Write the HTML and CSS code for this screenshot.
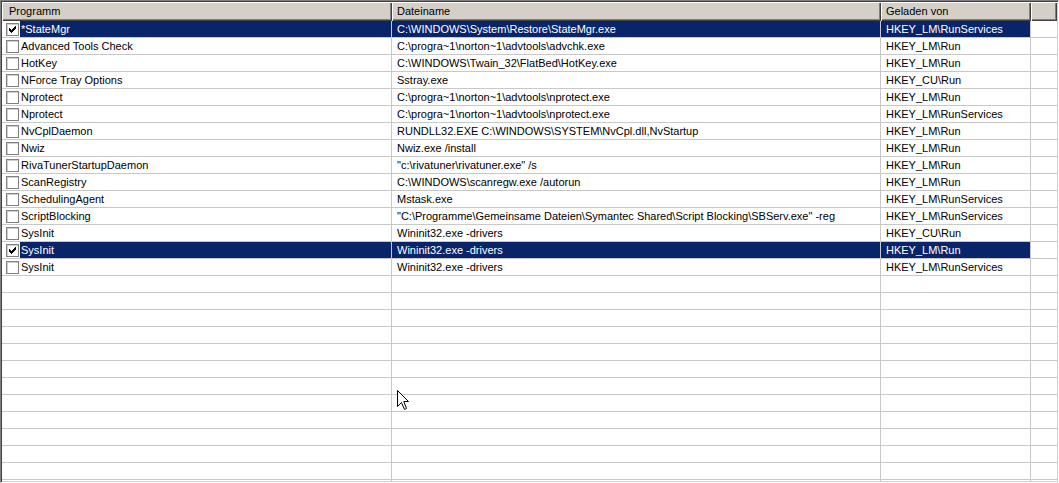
FILE: index.html
```html
<!DOCTYPE html>
<html>
<head>
<meta charset="utf-8">
<link rel="stylesheet" href="styles.css">
</head>
<body>
<div class="list">
  <div class="header">
    <div class="hcell c0 h0">Programm</div>
    <div class="hcell c1">Dateiname</div>
    <div class="hcell c2">Geladen von</div>
    <div class="hcell c3"></div>
  </div>
  <div class="rows">
    <div class="row sel"><div class="cell c0"><span class="cb on"></span><span class="name">*StateMgr</span></div><div class="cell c1">C:\WINDOWS\System\Restore\StateMgr.exe</div><div class="cell c2">HKEY_LM\RunServices</div><div class="cell c3"></div></div>
    <div class="row"><div class="cell c0"><span class="cb"></span><span class="name">Advanced Tools Check</span></div><div class="cell c1">C:\progra~1\norton~1\advtools\advchk.exe</div><div class="cell c2">HKEY_LM\Run</div><div class="cell c3"></div></div>
    <div class="row"><div class="cell c0"><span class="cb"></span><span class="name">HotKey</span></div><div class="cell c1">C:\WINDOWS\Twain_32\FlatBed\HotKey.exe</div><div class="cell c2">HKEY_LM\Run</div><div class="cell c3"></div></div>
    <div class="row"><div class="cell c0"><span class="cb"></span><span class="name">NForce Tray Options</span></div><div class="cell c1">Sstray.exe</div><div class="cell c2">HKEY_CU\Run</div><div class="cell c3"></div></div>
    <div class="row"><div class="cell c0"><span class="cb"></span><span class="name">Nprotect</span></div><div class="cell c1">C:\progra~1\norton~1\advtools\nprotect.exe</div><div class="cell c2">HKEY_LM\Run</div><div class="cell c3"></div></div>
    <div class="row"><div class="cell c0"><span class="cb"></span><span class="name">Nprotect</span></div><div class="cell c1">C:\progra~1\norton~1\advtools\nprotect.exe</div><div class="cell c2">HKEY_LM\RunServices</div><div class="cell c3"></div></div>
    <div class="row"><div class="cell c0"><span class="cb"></span><span class="name">NvCplDaemon</span></div><div class="cell c1">RUNDLL32.EXE C:\WINDOWS\SYSTEM\NvCpl.dll,NvStartup</div><div class="cell c2">HKEY_LM\Run</div><div class="cell c3"></div></div>
    <div class="row"><div class="cell c0"><span class="cb"></span><span class="name">Nwiz</span></div><div class="cell c1">Nwiz.exe /install</div><div class="cell c2">HKEY_LM\Run</div><div class="cell c3"></div></div>
    <div class="row"><div class="cell c0"><span class="cb"></span><span class="name">RivaTunerStartupDaemon</span></div><div class="cell c1">"c:\rivatuner\rivatuner.exe" /s</div><div class="cell c2">HKEY_LM\Run</div><div class="cell c3"></div></div>
    <div class="row"><div class="cell c0"><span class="cb"></span><span class="name">ScanRegistry</span></div><div class="cell c1">C:\WINDOWS\scanregw.exe /autorun</div><div class="cell c2">HKEY_LM\Run</div><div class="cell c3"></div></div>
    <div class="row"><div class="cell c0"><span class="cb"></span><span class="name">SchedulingAgent</span></div><div class="cell c1">Mstask.exe</div><div class="cell c2">HKEY_LM\RunServices</div><div class="cell c3"></div></div>
    <div class="row"><div class="cell c0"><span class="cb"></span><span class="name">ScriptBlocking</span></div><div class="cell c1">"C:\Programme\Gemeinsame Dateien\Symantec Shared\Script Blocking\SBServ.exe" -reg</div><div class="cell c2">HKEY_LM\RunServices</div><div class="cell c3"></div></div>
    <div class="row"><div class="cell c0"><span class="cb"></span><span class="name">SysInit</span></div><div class="cell c1">Wininit32.exe -drivers</div><div class="cell c2">HKEY_CU\Run</div><div class="cell c3"></div></div>
    <div class="row sel"><div class="cell c0"><span class="cb on"></span><span class="name">SysInit</span></div><div class="cell c1">Wininit32.exe -drivers</div><div class="cell c2">HKEY_LM\Run</div><div class="cell c3"></div></div>
    <div class="row"><div class="cell c0"><span class="cb"></span><span class="name">SysInit</span></div><div class="cell c1">Wininit32.exe -drivers</div><div class="cell c2">HKEY_LM\RunServices</div><div class="cell c3"></div></div>
    <div class="row"><div class="cell c0"></div><div class="cell c1"></div><div class="cell c2"></div><div class="cell c3"></div></div>
    <div class="row"><div class="cell c0"></div><div class="cell c1"></div><div class="cell c2"></div><div class="cell c3"></div></div>
    <div class="row"><div class="cell c0"></div><div class="cell c1"></div><div class="cell c2"></div><div class="cell c3"></div></div>
    <div class="row"><div class="cell c0"></div><div class="cell c1"></div><div class="cell c2"></div><div class="cell c3"></div></div>
    <div class="row"><div class="cell c0"></div><div class="cell c1"></div><div class="cell c2"></div><div class="cell c3"></div></div>
    <div class="row"><div class="cell c0"></div><div class="cell c1"></div><div class="cell c2"></div><div class="cell c3"></div></div>
    <div class="row"><div class="cell c0"></div><div class="cell c1"></div><div class="cell c2"></div><div class="cell c3"></div></div>
    <div class="row"><div class="cell c0"></div><div class="cell c1"></div><div class="cell c2"></div><div class="cell c3"></div></div>
    <div class="row"><div class="cell c0"></div><div class="cell c1"></div><div class="cell c2"></div><div class="cell c3"></div></div>
    <div class="row"><div class="cell c0"></div><div class="cell c1"></div><div class="cell c2"></div><div class="cell c3"></div></div>
    <div class="row"><div class="cell c0"></div><div class="cell c1"></div><div class="cell c2"></div><div class="cell c3"></div></div>
    <div class="row"><div class="cell c0"></div><div class="cell c1"></div><div class="cell c2"></div><div class="cell c3"></div></div>
    <div class="row"><div class="cell c0"></div><div class="cell c1"></div><div class="cell c2"></div><div class="cell c3"></div></div>
  </div>
  <svg class="cursor" width="13" height="21" viewBox="0 0 13 21"><path d="M0.5 0.5 L0.5 16.5 L4.5 12.5 L7.5 19.5 L9.5 18.5 L6.8 11.5 L11.5 11.5 Z" fill="#fff" stroke="#000" stroke-width="1" stroke-linejoin="miter"/></svg>
</div>
</body>
</html>
```

FILE: styles.css
```css
html, body {
  margin: 0;
  padding: 0;
  background: #fff;
}
body {
  width: 1059px;
  height: 483px;
  overflow: hidden;
  font-family: "Liberation Sans", Arial, sans-serif;
  font-size: 11px;
  color: #000;
}
.list {
  position: relative;
  box-sizing: border-box;
  width: 1059px;
  height: 483px;
  border-top: 1px solid #808080;
  border-left: 1px solid #808080;
  border-right: 1px solid #fff;
  border-bottom: 1px solid #fff;
  box-shadow: inset 1px 1px 0 #404040, inset -1px -1px 0 #d4d0c8;
  padding: 1px;
  overflow: hidden;
  background: #fff;
}
.header {
  display: flex;
  height: 19px;
}
.hcell {
  box-sizing: border-box;
  height: 19px;
  line-height: 19px;
  background: #d4d0c8;
  padding-left: 5px;
  white-space: nowrap;
  box-shadow: inset 1px 1px 0 #fff, inset -1px -1px 0 #404040, inset -2px -2px 0 #808080;
}
.h0 { padding-left: 7px; }
.c0 { width: 390px; flex: none; }
.c1 { width: 489px; flex: none; }
.c2 { width: 150px; flex: none; }
.c3 { flex: 1; }
.rows {
  display: flex;
  flex-direction: column;
}
.row {
  display: flex;
  height: 17px;
  flex: none;
}
.cell {
  box-sizing: border-box;
  height: 17px;
  line-height: 17px;
  border-right: 1px solid #c8c8c8;
  border-bottom: 1px solid #c8c8c8;
  padding-left: 5px;
  white-space: nowrap;
  overflow: hidden;
}
.cell.c0 {
  padding-left: 4px;
  display: flex;
  align-items: stretch;
}
.cell.c3 { border-right: none; }
.cb {
  box-sizing: border-box;
  width: 13px;
  height: 13px;
  margin-top: 2px;
  margin-right: 1px;
  flex: none;
  border: 1px solid #808080;
  box-shadow: inset 1px 1px 0 #d4d0c8;
  background: #fff;
  position: relative;
}
.cb.on::after {
  content: "";
  position: absolute;
  left: 2px;
  top: 2px;
  width: 7px;
  height: 7px;
  background:
    linear-gradient(#000, #000) 0 2px / 1px 3px no-repeat,
    linear-gradient(#000, #000) 1px 3px / 1px 3px no-repeat,
    linear-gradient(#000, #000) 2px 4px / 1px 3px no-repeat,
    linear-gradient(#000, #000) 3px 3px / 1px 3px no-repeat,
    linear-gradient(#000, #000) 4px 2px / 1px 3px no-repeat,
    linear-gradient(#000, #000) 5px 1px / 1px 3px no-repeat,
    linear-gradient(#000, #000) 6px 0 / 1px 3px no-repeat;
}
.name {
  padding-left: 1px;
  flex: 1;
  height: 16px;
  line-height: 17px;
}
.sel .name,
.sel .c1,
.sel .c2 {
  background: #0a246a;
  color: #fff;
}
.cursor {
  position: absolute;
  left: 396px;
  top: 389px;
}
```
